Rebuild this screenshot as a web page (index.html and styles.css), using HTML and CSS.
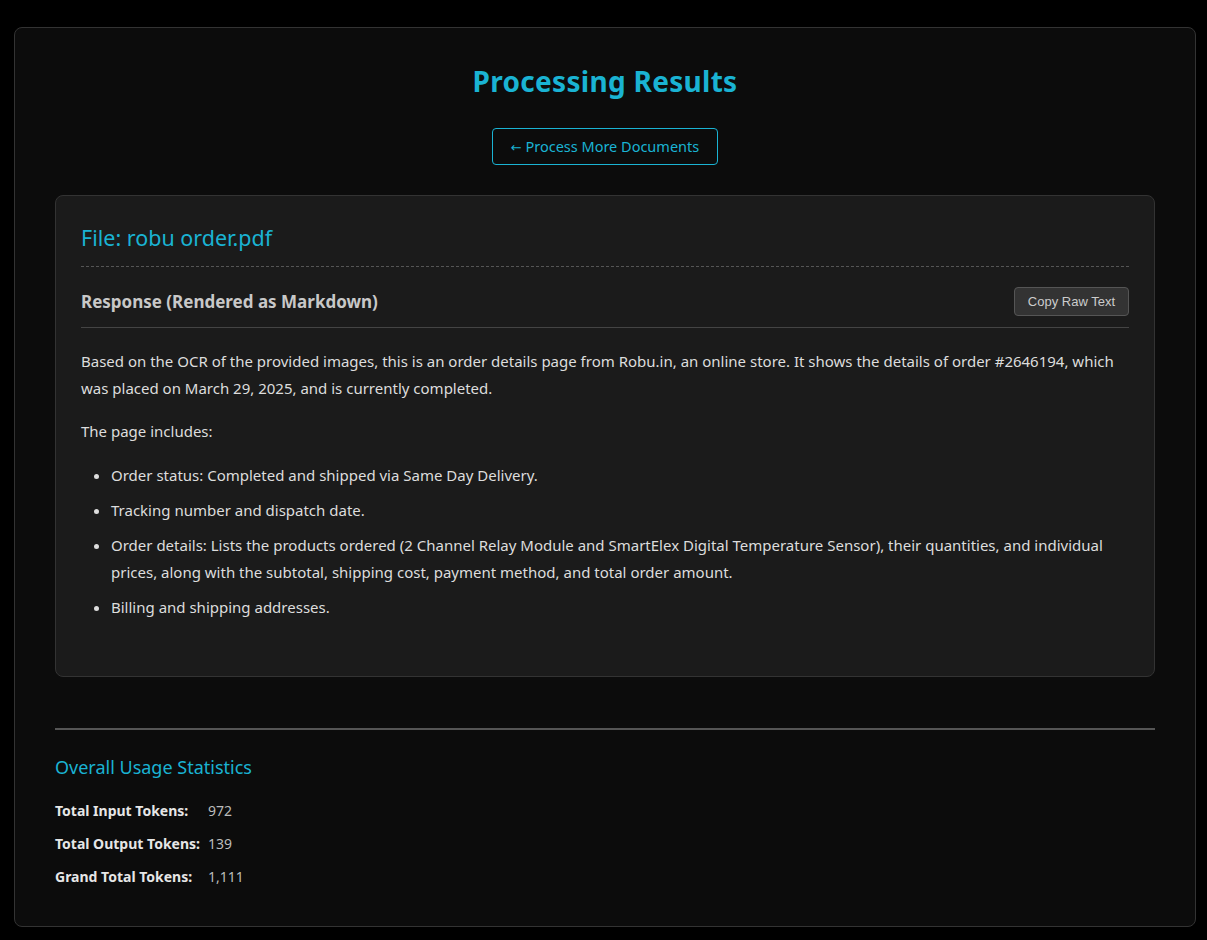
FILE: index.html
```html
<!DOCTYPE html>
<html lang="en">
<head>
<meta charset="utf-8">
<title>Processing Results</title>
<link rel="stylesheet" href="styles.css">
</head>
<body>
<div class="container">
  <h1 class="title">Processing Results</h1>
  <div class="back-wrap"><a class="back-btn" href="#"><span class="arrow">←</span> Process More Documents</a></div>

  <section class="card">
    <h2 class="file-title">File: robu order.pdf</h2>
    <div class="response-head">
      <h3 class="response-title">Response (Rendered as Markdown)</h3>
      <button class="copy-btn">Copy Raw Text</button>
    </div>
    <div class="markdown">
      <p>Based on the OCR of the provided images, this is an order details page from Robu.in, an online store. It shows the details of order #2646194, which was placed on March 29, 2025, and is currently completed.</p>
      <p>The page includes:</p>
      <ul>
        <li>Order status: Completed and shipped via Same Day Delivery.</li>
        <li>Tracking number and dispatch date.</li>
        <li>Order details: Lists the products ordered (2 Channel Relay Module and SmartElex Digital Temperature Sensor), their quantities, and individual prices, along with the subtotal, shipping cost, payment method, and total order amount.</li>
        <li>Billing and shipping addresses.</li>
      </ul>
    </div>
  </section>

  <hr class="divider">

  <section class="stats">
    <h3 class="stats-title">Overall Usage Statistics</h3>
    <div class="stats-grid">
      <span class="label">Total Input Tokens:</span><span class="value">972</span>
      <span class="label">Total Output Tokens:</span><span class="value">139</span>
      <span class="label">Grand Total Tokens:</span><span class="value">1,111</span>
    </div>
  </section>
</div>
</body>
</html>
```

FILE: styles.css
```css
html, body {
  margin: 0;
  padding: 0;
  background: #000;
}
body {
  font-family: "Noto Sans", "Open Sans", sans-serif;
  color: #ddd;
  padding: 27px 0 14px;
}
.container {
  width: 1100px;
  margin: 0 0 0 14px;
  padding: 22px 40px 39px;
  background: #0c0c0c;
  border: 1px solid #333;
  border-radius: 8px;
}
.title {
  margin: 11px 0 0;
  text-align: center;
  color: #1ab3d3;
  font-size: 28px;
  line-height: 40px;
  font-weight: 700;
  letter-spacing: 0.3px;
}
.back-wrap {
  display: flex;
  justify-content: center;
  margin-top: 27px;
}
.back-btn {
  display: inline-block;
  padding: 0 18px;
  height: 35px;
  line-height: 35px;
  border: 1px solid #1ab3d3;
  border-radius: 4px;
  color: #1ab3d3;
  text-decoration: none;
  font-size: 14.5px;
}
.arrow {
  font-family: "DejaVu Sans", sans-serif;
  font-size: 13px;
}
.card {
  margin-top: 30px;
  background: #1b1b1b;
  border: 1px solid #333;
  border-radius: 8px;
  padding: 27px 25px 47px;
}
.file-title {
  margin: 0;
  padding-bottom: 13px;
  border-bottom: 1px dashed #555;
  color: #1ab3d3;
  font-size: 21.5px;
  line-height: 30px;
  font-weight: 400;
}
.response-head {
  display: flex;
  align-items: center;
  justify-content: space-between;
  padding: 20px 0 11px;
  border-bottom: 1px solid #444;
}
.response-title {
  margin: 0;
  font-size: 17px;
  line-height: 24px;
  color: #c8c8c8;
  font-weight: 700;
}
.copy-btn {
  font-family: "Liberation Sans", Arial, sans-serif;
  font-size: 13px;
  color: #ccc;
  background: #333;
  border: 1px solid #555;
  border-radius: 4px;
  height: 29px;
  padding: 0 13px;
}
.markdown {
  font-size: 15px;
  line-height: 27px;
  color: #ddd;
  padding-top: 20px;
}
.markdown p {
  margin: 0 0 16px;
}
.markdown ul {
  margin: 0;
  padding: 1px 0 0 30px;
}
.markdown li {
  margin-bottom: 8px;
}
.divider {
  margin: 51px 0 0;
  border: 0;
  height: 2px;
  background: #555;
}
.stats {
  padding-top: 24px;
}
.stats-title {
  margin: 0;
  color: #1ab3d3;
  font-size: 18px;
  line-height: 26px;
  font-weight: 400;
}
.stats-grid {
  display: grid;
  grid-template-columns: 153px auto;
  row-gap: 12px;
  margin-top: 20px;
  font-size: 14px;
  line-height: 21px;
}
.label {
  font-weight: 700;
  color: #e6e6e6;
}
.value {
  color: #bbb;
}
```
